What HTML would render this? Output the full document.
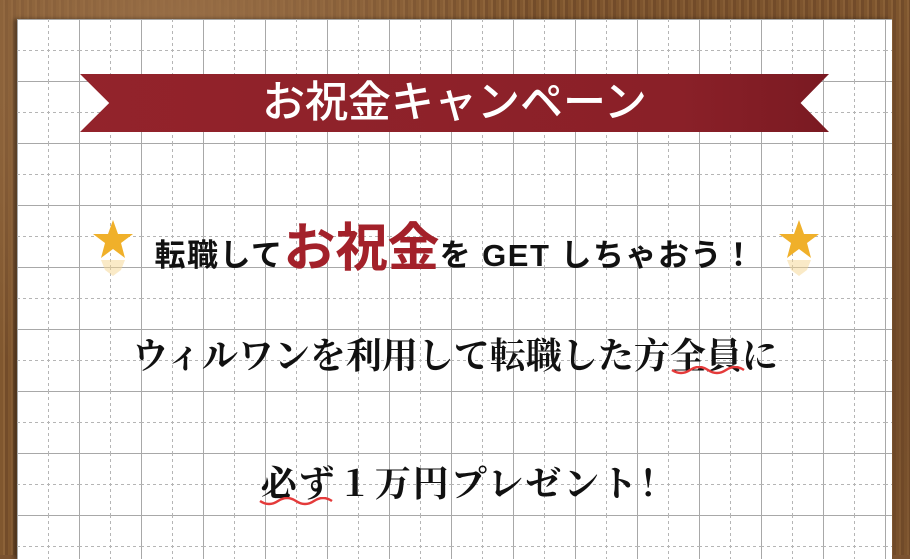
<!DOCTYPE html>
<html><head><meta charset="utf-8"><style>
body{margin:0;width:910px;height:555px;overflow:hidden;background:#7a5230;position:relative;font-family:"Liberation Sans","Noto Sans CJK JP",sans-serif}
.wood{position:absolute;inset:0;background:radial-gradient(circle at 20% 10%,#9a7048 0,transparent 40%),radial-gradient(circle at 80% 60%,#6b4526 0,transparent 50%),repeating-linear-gradient(90deg,#80572f 0 3px,#8c6238 3px 5px,#734c2a 5px 8px);}
.paper{position:absolute;left:17px;top:19px;width:875px;height:540px;background:#fff;box-shadow:-3px 0 4px rgba(0,0,0,.4)}
.banner{position:absolute;left:80px;top:74px;width:749px;height:58px;background:linear-gradient(90deg,#93232b,#8a2028 80%,#7a1a22);clip-path:polygon(0 0,100% 0,96.2% 50%,100% 100%,0 100%,3.9% 50%)}
.bt{position:absolute;left:80px;top:74px;width:749px;height:58px;line-height:58px;text-align:center;color:#fff;font-size:43px;font-weight:500}
.l2{position:absolute;left:0;width:910px;top:206px;text-align:center;font-size:31px;font-weight:bold;color:#111;white-space:nowrap;letter-spacing:1.5px}
.l2 .r{color:#a3212a;font-size:52px;letter-spacing:0}
.serif{position:absolute;left:0;width:910px;text-align:center;font-family:"Liberation Serif","Noto Serif CJK SC",serif;font-size:36px;font-weight:bold;color:#111;white-space:nowrap}
.wv{position:absolute;height:10px}
</style></head><body>
<div class="wood"></div>
<div class="paper"></div>
<svg style="position:absolute;left:17px;top:19px" width="875" height="540">
<defs><pattern id="g" width="62" height="62" patternUnits="userSpaceOnUse">
<path d="M0.5,0V62M0,0.5H62" stroke="#a8a8a8" stroke-width="1"/>
<path d="M31.5,0V62M0,31.5H62" stroke="#b5b5b5" stroke-width="1" stroke-dasharray="3 3"/>
</pattern></defs>
<rect width="875" height="540" fill="url(#g)"/>
</svg>
<div class="banner"></div>
<div class="bt">お祝金キャンペーン</div>
<svg style="position:absolute;left:91px;top:218px" width="44" height="60"><polygon points="22,2 27,16 42,16 30,25 34,40 22,31 10,40 14,25 2,16 17,16" fill="#f0b02a"/><polygon points="10,42 34,42 30,52 22,58 14,52" fill="#f5d690" opacity=".5"/></svg>
<svg style="position:absolute;left:777px;top:218px" width="44" height="60"><polygon points="22,2 27,16 42,16 30,25 34,40 22,31 10,40 14,25 2,16 17,16" fill="#f0b02a"/><polygon points="10,42 34,42 30,52 22,58 14,52" fill="#f5d690" opacity=".5"/></svg>
<div class="l2">転職して<span class="r">お祝金</span>を GET しちゃおう！</div>
<div class="serif" style="top:328px">ウィルワンを利用して転職した方全員に</div>
<div class="serif" style="top:456px;left:14px;letter-spacing:2px">必ず１万円プレゼント！</div>
<svg class="wv" style="left:670px;top:366px" width="76" height="10"><path d="M2,4 q9,6 18,0 t18,0 t18,0 t18,0" fill="none" stroke="#e43a3a" stroke-width="2.5"/></svg>
<svg class="wv" style="left:258px;top:497px" width="76" height="10"><path d="M2,4 q9,6 18,0 t18,0 t18,0 t18,0" fill="none" stroke="#e43a3a" stroke-width="2.5"/></svg>
</body></html>
